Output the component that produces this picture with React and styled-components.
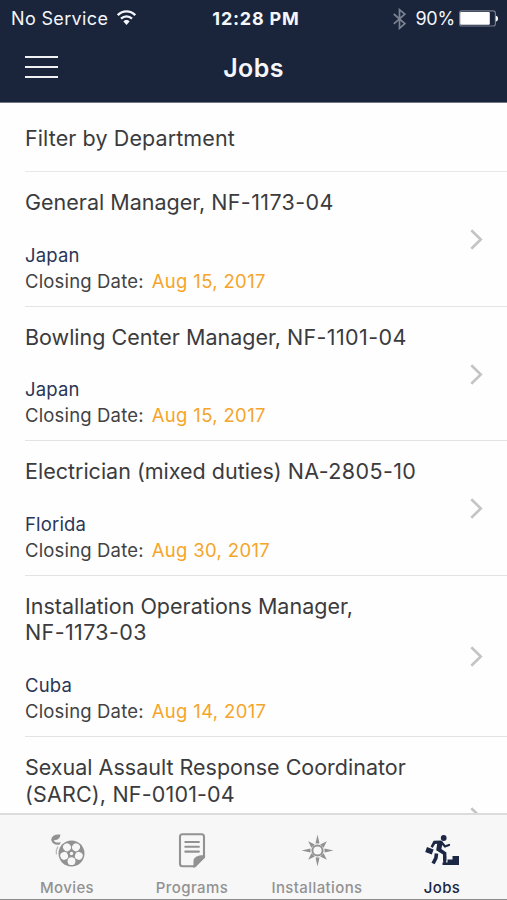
import React from 'react';
import styled, { createGlobalStyle } from 'styled-components';

const GlobalStyle = createGlobalStyle`
* {
  box-sizing: border-box;
}
body {
  margin: 0;
  font-family: Inter, 'Liberation Sans', sans-serif;
  background: #fefefe;
}
`;
const Screen = styled.div`
width: 507px;
height: 900px;
display: flex;
flex-direction: column;
overflow: hidden;
background: #fefefe;
`;
const Header = styled.header`
height: 103px;
flex: none;
background: #1a253c;
border-bottom: 1px solid #70767f;
color: #f4f6fa;
`;
const StatusBar = styled.div`
height: 36px;
padding: 0 9px 0 11px;
display: grid;
grid-template-columns: 1fr auto 1fr;
align-items: center;
font-size: 18px;
line-height: 37px;
`;
const Carrier = styled.div`
display: flex;
align-items: center;
gap: 9px;
letter-spacing: 0.35px;
`;
const Clock = styled.div`
font-weight: 700;
letter-spacing: 0.8px;
margin-left: 3px;
`;
const Power = styled.div`
display: flex;
align-items: center;
justify-content: flex-end;
letter-spacing: -0.2px;
`;
const Percent = styled.span`
margin: 0 4px 0 9px;
`;
const NavBar = styled.div`
height: 64px;
padding: 0 25px;
display: grid;
grid-template-columns: 33px 1fr 33px;
align-items: center;
`;
const MenuButton = styled.button`
height: 22px;
padding: 0;
margin-bottom: 3px;
border: 0;
background: none;
display: flex;
flex-direction: column;
justify-content: space-between;
`;
const MenuLine = styled.span`
width: 33px;
height: 2.4px;
background: #f0f1f5;
`;
const NavTitle = styled.h1`
margin: 0;
font-size: 25px;
font-weight: 600;
line-height: 65px;
letter-spacing: 0.4px;
text-align: center;
`;
const List = styled.main`
flex: 1;
min-height: 0;
overflow: hidden;
padding-left: 25px;
color: #3b3b3d;
`;
const Filter = styled.div`
height: 69px;
border-bottom: 1px solid #e9e9ea;
font-size: 21.5px;
line-height: 70px;
letter-spacing: 0.1px;
`;
const Row = styled.div`
padding: 17px 24px 11.7px 0;
border-bottom: 1px solid #e4e4e5;
display: flex;
align-items: center;
justify-content: space-between;
`;
const JobTitle = styled.h2`
margin: 0 0 26.2px;
font-size: 21.5px;
font-weight: 400;
line-height: 26.7px;
`;
const JobCode = styled.span`
display: ${(props) => (props.$wrap ? 'block' : 'inline')};
letter-spacing: ${(props) => props.$spacing || 0.38}px;
`;
const Detail = styled.p`
margin: 0;
font-size: 18.5px;
line-height: 26px;
letter-spacing: 0.16px;
color: ${(props) => props.$color || '#424244'};
`;
const ClosingDate = styled.span`
margin-left: 8px;
letter-spacing: 0.35px;
color: #f5a52a;
`;
const TabBar = styled.nav`
height: 87px;
flex: none;
padding: 0 3px 0 4.5px;
display: grid;
grid-template-columns: repeat(4, 125px);
border-top: 2px solid #dcdcdc;
border-bottom: 1px solid #8d8d8d;
background: #f7f7f7;
`;
const Tab = styled.div`
padding-top: 17px;
display: flex;
flex-direction: column;
align-items: center;
color: ${(props) => (props.$active ? '#1b2744' : '#929292')};
`;
const TabLabel = styled.span`
margin-top: 9.5px;
font-size: 15px;
font-weight: 500;
line-height: 20px;
letter-spacing: 0.4px;
`;
const ChevronIcon = styled.svg`
flex: none;
margin-bottom: 4px;
`;

const WifiIcon = () => (
  <svg width="19" height="18" viewBox="0 0 19 18" fill="none" stroke="currentColor" strokeWidth="2.3">
    <path d="M.8 5.2C5.8.2 13.2.2 18.2 5.2" />
    <path d="M4 8.6c3.2-3.1 7.8-3.1 11 0" />
    <path d="M6.4 11.5c1.8-1.9 4.4-1.9 6.2 0L9.5 15z" fill="currentColor" stroke="none" />
  </svg>
);

const BluetoothIcon = () => (
  <svg width="13" height="22" viewBox="0 0 13 22" fill="none" stroke="#7b8391" strokeWidth="1.7">
    <path d="M.8 6l11 9.6-5.3 4.7V1.7l5.3 4.5L.8 15.8" />
  </svg>
);

const BatteryIcon = () => (
  <svg width="39" height="17" viewBox="0 0 39 17">
    <rect x=".6" y=".8" width="35.8" height="15.2" rx="2.2" fill="none" stroke="#747c8b" strokeWidth="1.2" />
    <rect x="1.2" y="2" width="29.6" height="12.8" rx="1" fill="#fff" />
    <path d="M36.8 5.8c3 .4 3 5.2 0 5.6z" fill="#fff" />
  </svg>
);

const Chevron = () => (
  <ChevronIcon width="13" height="21" viewBox="0 0 13 21" fill="none" stroke="#c4c4c6" strokeWidth="2.6">
    <path d="M1.3 1.2l9.5 9.3-9.5 9.3" />
  </ChevronIcon>
);

const holes = [0, 72, 144, 216, 288];

const MoviesIcon = () => (
  <svg width="36" height="36" viewBox="0 0 36 36" fill="currentColor">
    <circle cx="22.5" cy="21.5" r="13" />
    {holes.map((angle) => (
      <circle key={angle} cx="22.5" cy="13.8" r="3.9" fill="#f7f7f7" transform={`rotate(${angle + 36} 22.5 21.5)`} />
    ))}
    <circle cx="22.5" cy="21.5" r="1.7" fill="#f7f7f7" />
    <path d="M2.2 7.6C3 3.6 6 2 11.5 2.6 11 6.6 8.5 8.7 4.7 8.2c.6 2 3.4 3 7.3 2l-1.6 2.6C5.7 13.1 2.8 11.3 2.2 7.6z" />
    <path d="M9 14.5c-1.6 2.2-2 5-1.6 8" fill="none" stroke="currentColor" strokeWidth="1.2" opacity=".6" />
  </svg>
);

const ProgramsIcon = () => (
  <svg width="36" height="36" viewBox="0 0 36 36" fill="none" stroke="currentColor" strokeWidth="2.1">
    <path d="M8.5 2.2h19q2.500 0 2.500 2.500V25l-9 9.200H8.500Q6 34.200 6 31.700v-27q0-2.500 2.500-2.500z" />
    <path d="M11.3 10h13.6M11.3 14.8h13.6M11.3 19.6h13.6" strokeLinecap="round" />
    <path d="M20.5 34v-4.500q0-5.500 9.500-5.500v1z" fill="currentColor" />
  </svg>
);

const InstallationsIcon = () => (
  <svg width="36" height="36" viewBox="0 0 36 36" fill="currentColor">
    {[0, 90, 180, 270].map((angle) => (
      <g key={angle} transform={`rotate(${angle} 18.5 18.5)`}>
        <path d="M18.5 2.500l2 9h-4z" />
        <path d="M27.8 9.200l-3.200 6.600-3.400-3.400z" />
      </g>
    ))}
    <circle cx="18.5" cy="18.5" r="5.1" fill="#f7f7f7" stroke="currentColor" strokeWidth="2" />
  </svg>
);

const JobsIcon = () => (
  <svg width="36" height="36" viewBox="0 0 36 36" fill="currentColor">
    <circle cx="19.7" cy="6" r="2.9" />
    <path d="M9.6 8.7l7.3-.3q2 .2 1.7 2.5l-1.2 6.2 5 3.4v8H19v-6l-6.800-4.200 1-6.600-2.100.2-2.500 4-2-1.300z" />
    <path d="M17.7 10.5l3.300 4 4-1.500" fill="none" stroke="currentColor" strokeWidth="2.3" strokeLinecap="round" />
    <path d="M20.7 24v8" fill="none" stroke="currentColor" strokeWidth="3" />
    <path d="M12.5 21.5l-.6 4.500-2.800 5.500" fill="none" stroke="currentColor" strokeWidth="3.6" />
    <path d="M3 15l6.600 2.600-1.800 5-6.600-2.600z" />
    <path d="M18.5 33v-2.600h5v-3h5V24H35v9z" />
  </svg>
);

const jobs = [
  { title: 'General Manager,', code: 'NF-1173-04', place: 'Japan', date: 'Aug 15, 2017' },
  { title: 'Bowling Center Manager,', code: 'NF-1101-04', place: 'Japan', date: 'Aug 15, 2017' },
  { title: 'Electrician (mixed duties)', code: 'NA-2805-10', place: 'Florida', date: 'Aug 30, 2017' },
  { title: 'Installation Operations Manager,', code: 'NF-1173-03', wrap: true, place: 'Cuba', date: 'Aug 14, 2017' },
  { title: 'Sexual Assault Response Coordinator', code: '(SARC), NF-0101-04', wrap: true, spacing: 0.17 },
];

const tabs = [
  { label: 'Movies', icon: <MoviesIcon /> },
  { label: 'Programs', icon: <ProgramsIcon /> },
  { label: 'Installations', icon: <InstallationsIcon /> },
  { label: 'Jobs', icon: <JobsIcon />, active: true },
];

const JobRow = (props) => {
  return (
    <Row>
      <div>
        <JobTitle>
          {props.title} <JobCode $wrap={props.wrap} $spacing={props.spacing}>{props.code}</JobCode>
        </JobTitle>
        <Detail $color="#2b3557">{props.place || '\u00a0'}</Detail>
        <Detail>
          {props.date ? 'Closing Date:' : '\u00a0'}
          {props.date && <ClosingDate>{props.date}</ClosingDate>}
        </Detail>
      </div>
      <Chevron />
    </Row>
  );
};

const App = () => {
  return (
    <Screen>
      <GlobalStyle />
      <Header>
        <StatusBar>
          <Carrier>
            No Service
            <WifiIcon />
          </Carrier>
          <Clock>12:28 PM</Clock>
          <Power>
            <BluetoothIcon />
            <Percent>90%</Percent>
            <BatteryIcon />
          </Power>
        </StatusBar>
        <NavBar>
          <MenuButton aria-label="Menu">
            <MenuLine />
            <MenuLine />
            <MenuLine />
          </MenuButton>
          <NavTitle>Jobs</NavTitle>
        </NavBar>
      </Header>
      <List>
        <Filter>Filter by Department</Filter>
        {jobs.map((job) => (
          <JobRow key={job.title} {...job} />
        ))}
      </List>
      <TabBar>
        {tabs.map((tab) => (
          <Tab key={tab.label} $active={tab.active}>
            {tab.icon}
            <TabLabel>{tab.label}</TabLabel>
          </Tab>
        ))}
      </TabBar>
    </Screen>
  );
};

export default App;
